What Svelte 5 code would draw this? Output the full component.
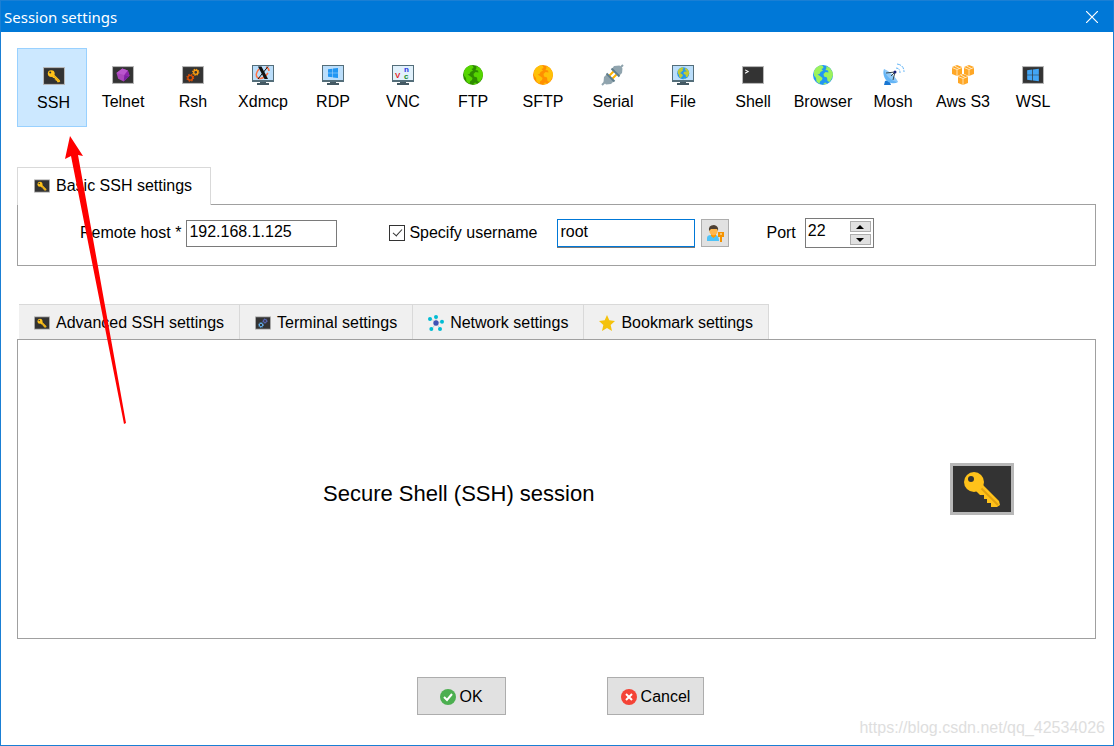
<script lang="ts">
    const sessions = [
        'SSH', 'Telnet', 'Rsh', 'Xdmcp', 'RDP', 'VNC', 'FTP', 'SFTP',
        'Serial', 'File', 'Shell', 'Browser', 'Mosh', 'Aws S3', 'WSL'
    ];
    const tabs = [
        { label: 'Advanced SSH settings', icon: 'SSH' },
        { label: 'Terminal settings', icon: 'Terminal' },
        { label: 'Network settings', icon: 'Network' },
        { label: 'Bookmark settings', icon: 'Bookmark' }
    ];

    let selected = $state('SSH');
    let host = $state('192.168.1.125');
    let specifyUser = $state(true);
    let username = $state('root');
    let port = $state(22);
</script>

{#snippet key()}
    <path d="M33 22 49 38 50 42 47 44H41V40H37V36H34V32H30L26 28z" fill="#ffc21a" />
    <path d="M31 25 48 42" stroke="#e0a010" stroke-width="2" />
    <circle cx="24" cy="19" r="10" fill="#ffc21a" />
    <circle cx="21" cy="16" r="3" fill="#333" />
{/snippet}

{#snippet gears(big: string, small: string)}
    <g fill="none">
        <circle cx="24" cy="34" r="7" stroke={big} stroke-width="4" />
        <circle cx="24" cy="34" r="10" stroke={big} stroke-width="3" stroke-dasharray="4 4" />
        <circle cx="40" cy="18" r="6" stroke={small} stroke-width="4" />
        <circle cx="40" cy="18" r="9" stroke={small} stroke-width="3" stroke-dasharray="4 3" />
    </g>
{/snippet}

{#snippet globe(sea: string, land: string)}
    <circle cx="12" cy="12" r="10" fill={sea} />
    <path
        d="M3 8Q5 3.500 10 2.200L12 3 12.500 5 10.500 6 12 7.500 9.500 9 8.500 11 6.500 11.500 9 13 11.500 15 11 17 9 18.500 8.500 21 5.500 18.500 5 15 3 12.500z"
        fill={land}
    />
    <path
        d="M15 3 19 5 21.500 9 22 12 20.500 16 18.500 19 16.500 18 16 14.500 13 13.500 12.500 11 14.500 9 17.500 9.500 17 7.500 14.500 7 15.500 5z"
        fill={land}
    />
    <path d="M11.500 21.800 14 19.500 16.500 20.500z" fill={land} />
{/snippet}

{#snippet sessionIcon(name: string)}
    {#if ['SSH', 'Telnet', 'Rsh', 'Shell', 'WSL', 'Terminal'].includes(name)}
        <svg class="icon screen" viewBox="0 0 64 52" aria-hidden="true">
            <rect x="1.500" y="1.500" width="61" height="49" fill="#333" stroke="#b8b8b8" stroke-width="3" />
            {#if name === 'SSH'}
                {@render key()}
            {:else if name === 'Telnet'}
                <path d="M30 7 46 13 51 28 34 45 18 37 13 20z" fill="#ab47bc" />
                <path d="M30 7 46 13 36 26 13 20z" fill="#ba55cd" />
                <path d="M36 26 51 28 34 45z" fill="#7b1fa2" />
                <path d="M46 13 51 28 36 26z" fill="#8e24aa" />
            {:else if name === 'Rsh'}
                {@render gears('#e65100', '#ffa010')}
            {:else if name === 'Terminal'}
                {@render gears('#64b5f6', '#5c6bc0')}
            {:else if name === 'Shell'}
                <path d="M9 11 18 16 9 21" fill="none" stroke="#fff" stroke-width="3" />
            {:else}
                <path d="M15 12 30 10V25H15zM32 10 49 8V25H32zM15 27H30V42L15 40zM32 27H49V44L32 42z" fill="#42a5f5" />
            {/if}
        </svg>
    {:else if ['Xdmcp', 'RDP', 'VNC', 'File'].includes(name)}
        <svg class="icon" viewBox="0 0 24 24" aria-hidden="true">
            <path d="M9 18H15V20H18V22H6V20H9z" fill="#455a64" />
            <rect x="1" y="2" width="22" height="17" fill="#546e7a" />
            <rect x="2" y="3" width="20" height="14" fill={name === 'VNC' ? '#e1f1fc' : '#bbdefb'} />
            {#if name === 'Xdmcp'}
                <path d="M8 6Q3 12 7 15 12 17 17 10M15 4Q18 5 18 8" fill="none" stroke="#ff7043" stroke-width="1.500" />
                <path d="M7 3.500H10.500L17 16H13.500z" fill="#111" />
                <path d="M17 3.500 7 16" stroke="#111" />
            {:else if name === 'RDP'}
                <path d="M7 6.300 11.500 5.700V9.700H7zM12 5.600 17 5V9.700H12zM7 10.300H11.500V14.300L7 13.700zM12 10.300H17V15L12 14.400z" fill="#2196f3" />
            {:else if name === 'VNC'}
                <g class="letters">
                    <text x="4" y="15" fill="#e51c1c">V</text>
                    <text x="13" y="9" fill="#2433e0">n</text>
                    <text x="13" y="16" fill="#168b27">c</text>
                </g>
            {:else}
                <g transform="translate(5 3) scale(.6)">
                    {@render globe('#2196f3', '#c0ca33')}
                </g>
            {/if}
        </svg>
    {:else}
        <svg class="icon" viewBox="0 0 24 24" aria-hidden="true">
            {#if name === 'FTP'}
                {@render globe('#2e8b00', '#55d500')}
            {:else if name === 'SFTP'}
                {@render globe('#ff8f00', '#ffc107')}
            {:else if name === 'Browser'}
                {@render globe('#2196f3', '#9cf25c')}
            {:else if name === 'Serial'}
                <path d="M1 22 5 18M22 2 19 5" stroke="#90a4ae" stroke-width="2" />
                <path d="M8.500 12.500 12.500 8.500M11.500 15.500 15.500 11.500" stroke="#ffb300" stroke-width="2" />
                <path d="M3 14 6 11 13 18 10 21 5 21.500 2.500 19z" fill="#90a4ae" />
                <path d="M13 3 18.500 2.500 21.500 5.500 21 10 18 13 11 6z" fill="#90a4ae" />
                <path d="M5.500 10.500 13.500 18.500M10.500 5.500 18.500 13.500" stroke="#607d8b" stroke-width="2" />
            {:else if name === 'Mosh'}
                <path d="M4 18 8 17 10 22H3z" fill="#1976d2" />
                <path d="M3 6C1 11 4 19 10 20Q14 21 17 19z" fill="#64b5f6" />
                <path d="M3 6C7 7 15 14 17 19 12 19 4 13 3 6z" fill="#90caf9" />
                <path d="M5 10 14 9 12 17M10 13 14 9" fill="none" stroke="#37474f" />
                <circle cx="14" cy="9" r="1.500" fill="#1a237e" />
                <path d="M15 5Q19 5 19 10M16 1Q23 2 23 9" fill="none" stroke="#64b5f6" stroke-dasharray="4 1" />
            {:else if name === 'Aws S3'}
                {#each [[1, 2], [13, 2], [7, 11]] as [x, y]}
                    <g transform="translate({x} {y})">
                        <path d="M5 0 10 2V9L5 11 0 9V2z" fill="#ffa726" />
                        <path d="M0 2.500 5 4.500 10 2.500M5 4.500V11M2.500 1 7.500 3.500" fill="none" stroke="#fff0d5" stroke-width=".8" />
                    </g>
                {/each}
            {:else if name === 'Network'}
                <path d="M12 12 4 5M12 12V3M12 12 21 10M12 12 18 20M12 12 6 21" stroke="#b0bec5" />
                <circle cx="12" cy="12" r="4" fill="#3f51b5" />
                <g fill="#00bcd4">
                    <circle cx="3" cy="6" r="3" />
                    <circle cx="12" cy="3" r="3" />
                    <circle cx="21" cy="10" r="3" />
                    <circle cx="18" cy="21" r="3" />
                    <circle cx="5" cy="21" r="3" />
                </g>
            {:else if name === 'Bookmark'}
                <path d="M12 0 15.500 8 24 9 17.500 15 19.500 24 12 19.500 4.500 24 6.500 15 0 9 8.500 8z" fill="#f4c20d" />
            {/if}
        </svg>
    {/if}
{/snippet}

<div class="window">
    <header>
        <h1>Session settings</h1>
        <button class="close" aria-label="Close">
            <svg viewBox="0 0 12 12" aria-hidden="true">
                <path d="M0 0 12 12M12 0 0 12" stroke="#fff" stroke-width="1.200" />
            </svg>
        </button>
    </header>

    <main>
        <nav>
            {#each sessions as name}
                <button class="session" class:active={selected === name} onclick={() => (selected = name)}>
                    {@render sessionIcon(name)}
                    <span>{name}</span>
                </button>
            {/each}
        </nav>

        <section>
            <button class="basic-tab">
                {@render sessionIcon('SSH')}
                Basic SSH settings
            </button>
            <div class="basic-panel">
                <label for="host">Remote host *</label>
                <input id="host" class="field host" type="text" bind:value={host} />
                <input id="specify" class="check" type="checkbox" bind:checked={specifyUser} />
                <label for="specify">Specify username</label>
                <input class="field user" type="text" aria-label="Username" bind:value={username} />
                <button class="credentials" aria-label="Manage credentials">
                    <svg viewBox="0 0 18 18" aria-hidden="true">
                        <path d="M1 17V14Q1 11 5 11H10Q13 12 13 17z" fill="#4fc3f7" />
                        <path d="M5 10H10V12L7.500 14 5 12z" fill="#ff9800" />
                        <circle cx="7.500" cy="7" r="4.200" fill="#ffb74d" />
                        <path d="M3 7Q2 1 8 1 13 2 12 7L11 5H5z" fill="#4e4033" />
                        <path d="M12 8H18V13H16V18H14V13H12z" fill="#f59300" />
                        <path d="M14 10H16" stroke="#fff3d6" />
                    </svg>
                </button>
                <label class="port-label" for="port">Port</label>
                <div class="spinner">
                    <input id="port" type="number" bind:value={port} />
                    <div class="steps">
                        <button aria-label="Increase port" onclick={() => port++}>
                            <svg viewBox="0 0 8 4" aria-hidden="true"><path d="M4 0 8 4H0z" /></svg>
                        </button>
                        <button aria-label="Decrease port" onclick={() => port--}>
                            <svg viewBox="0 0 8 4" aria-hidden="true"><path d="M0 0H8L4 4z" /></svg>
                        </button>
                    </div>
                </div>
            </div>
        </section>

        <section class="advanced">
            <div class="tabs">
                {#each tabs as tab}
                    <button class="tab">
                        {@render sessionIcon(tab.icon)}
                        {tab.label}
                    </button>
                {/each}
            </div>
            <div class="summary">
                <p>Secure Shell (SSH) session</p>
                <svg class="big-key" viewBox="0 0 64 52" aria-hidden="true">
                    <rect x="1.500" y="1.500" width="61" height="49" fill="#333" stroke="#b8b8b8" stroke-width="3" />
                    {@render key()}
                </svg>
            </div>
        </section>

        <footer>
            <button class="action">
                <svg viewBox="0 0 16 16" aria-hidden="true">
                    <circle cx="8" cy="8" r="8" fill="#4caf50" />
                    <path d="M4 8 7 11 12 5" fill="none" stroke="#fff" stroke-width="2" />
                </svg>
                OK
            </button>
            <button class="action">
                <svg viewBox="0 0 16 16" aria-hidden="true">
                    <circle cx="8" cy="8" r="8" fill="#f44336" />
                    <path d="M5 5 11 11M11 5 5 11" stroke="#fff" stroke-width="2" />
                </svg>
                Cancel
            </button>
        </footer>
    </main>

    <svg class="arrow" viewBox="0 0 64 290" aria-hidden="true">
        <path d="M6 0 19 20 14 19 62 287 60 288 7 20 1 23z" fill="#f00" />
    </svg>
    <span class="watermark">https://blog.csdn.net/qq_42534026</span>
</div>

<style>
    :global(body) {
        background: #fff;
    }

    .window {
        position: relative;
        box-sizing: border-box;
        min-height: 100vh;
        border: 1px solid #1a7fd4;
        font-family: "Liberation Sans", Arial, sans-serif;
        font-size: 16px;
        line-height: 20px;
        color: #000;
    }

    button,
    input {
        box-sizing: border-box;
        margin: 0;
        font: inherit;
        color: inherit;
        outline: none;
    }

    button {
        display: flex;
        align-items: center;
        justify-content: center;
    }

    header {
        display: flex;
        align-items: center;
        justify-content: space-between;
        height: 31px;
        padding-left: 3px;
        background: #0078d7;
    }

    h1 {
        margin: 0;
        font: 15px "Noto Sans", sans-serif;
        color: #fff;
    }

    .close {
        width: 42px;
        height: 31px;
        padding: 0;
        border: 0;
        background: none;
    }

    .close svg {
        width: 12px;
        height: 12px;
    }

    main {
        padding: 16px 17px 16px 16px;
    }

    nav {
        display: flex;
        margin-bottom: 40px;
    }

    .session {
        flex-direction: column;
        gap: 5px;
        width: 70px;
        height: 79px;
        padding: 0 0 1px 2px;
        border: 1px solid transparent;
        background: none;
        white-space: nowrap;
    }

    .session.active {
        padding: 1px 0 0 3px;
        border-color: #99d1ff;
        background: #cce8ff;
    }

    .icon {
        flex: none;
        width: 24px;
        height: 24px;
    }

    .icon.screen {
        width: 22px;
        margin: 0 1px;
    }

    .letters {
        font-size: 8px;
        font-weight: bold;
    }

    .basic-tab,
    .tab {
        gap: 6px;
        padding: 1px 15px 0;
        border: 1px solid #d9d9d9;
        white-space: nowrap;
    }

    .basic-tab {
        position: relative;
        height: 38px;
        padding: 0 18px 2px 16px;
        border-bottom: 0;
        background: #fff;
    }

    .basic-tab .icon,
    .tab .icon {
        width: 16px;
        height: 16px;
        margin: 0;
    }

    .basic-panel {
        display: flex;
        align-items: center;
        box-sizing: border-box;
        height: 62px;
        margin-top: -1px;
        padding: 0 0 4px 62px;
        border: 1px solid #a0a0a0;
        white-space: nowrap;
    }

    .field {
        height: 27px;
        padding: 0 3px 2px 2px;
        border: 1px solid #7a7a7a;
        background: #fff;
    }

    .host {
        width: 151px;
        margin: 0 52px 0 5px;
    }

    .check {
        position: relative;
        width: 16px;
        height: 16px;
        margin-right: 4px;
        border: 1px solid #333;
        appearance: none;
    }

    .check:checked::after {
        content: '';
        position: absolute;
        top: 1px;
        left: 5px;
        width: 4px;
        height: 8px;
        border: solid #333;
        border-width: 0 1px 1px 0;
        transform: rotate(42deg);
    }

    .user {
        width: 138px;
        height: 28px;
        margin: 0 6px 0 20px;
        border-color: #0078d7;
        box-shadow: 0 1px #7a7a7a;
    }

    .credentials {
        width: 28px;
        height: 28px;
        padding: 0;
        border: 1px solid #adadad;
        background: #e1e1e1;
    }

    .credentials svg {
        width: 18px;
        height: 18px;
    }

    .port-label {
        margin: 0 9px 0 37px;
    }

    .spinner {
        display: flex;
        align-items: center;
        box-sizing: border-box;
        width: 69px;
        height: 30px;
        padding: 0 2px;
        border: 1px solid #7a7a7a;
    }

    .spinner input {
        flex: 1;
        min-width: 0;
        padding: 0 0 4px;
        border: 0;
        background: none;
        appearance: textfield;
    }

    .spinner input::-webkit-inner-spin-button {
        appearance: none;
    }

    .steps {
        display: grid;
        gap: 2px;
    }

    .steps button {
        width: 21px;
        height: 11px;
        padding: 0;
        border: 1px solid #adadad;
        background: #e1e1e1;
    }

    .steps svg {
        width: 8px;
        height: 4px;
    }

    .advanced {
        margin-top: 38px;
    }

    .tabs {
        display: flex;
        padding-left: 2px;
    }

    .tab {
        height: 35px;
        border-width: 1px 1px 0 0;
        background: #f0f0f0;
    }

    .summary {
        display: flex;
        align-items: center;
        justify-content: space-between;
        box-sizing: border-box;
        min-height: 300px;
        padding: 0 81px 0 305px;
        border: 1px solid #a0a0a0;
    }

    .summary p {
        margin: 0;
        padding-top: 10px;
        font-size: 22px;
        line-height: 28px;
    }

    .big-key {
        width: 64px;
        height: 52px;
    }

    footer {
        display: flex;
        justify-content: center;
        gap: 101px;
        margin-top: 38px;
        padding-left: 8px;
    }

    .action {
        gap: 4px;
        height: 38px;
        min-width: 89px;
        padding: 1px 13px 0;
        border: 1px solid #adadad;
        background: #e1e1e1;
    }

    .action svg {
        width: 16px;
        height: 16px;
    }

    .arrow {
        position: absolute;
        top: 135px;
        left: 63px;
        width: 64px;
        height: 290px;
        pointer-events: none;
    }

    .watermark {
        position: absolute;
        right: 8px;
        bottom: 7px;
        color: #dedede;
    }
</style>
